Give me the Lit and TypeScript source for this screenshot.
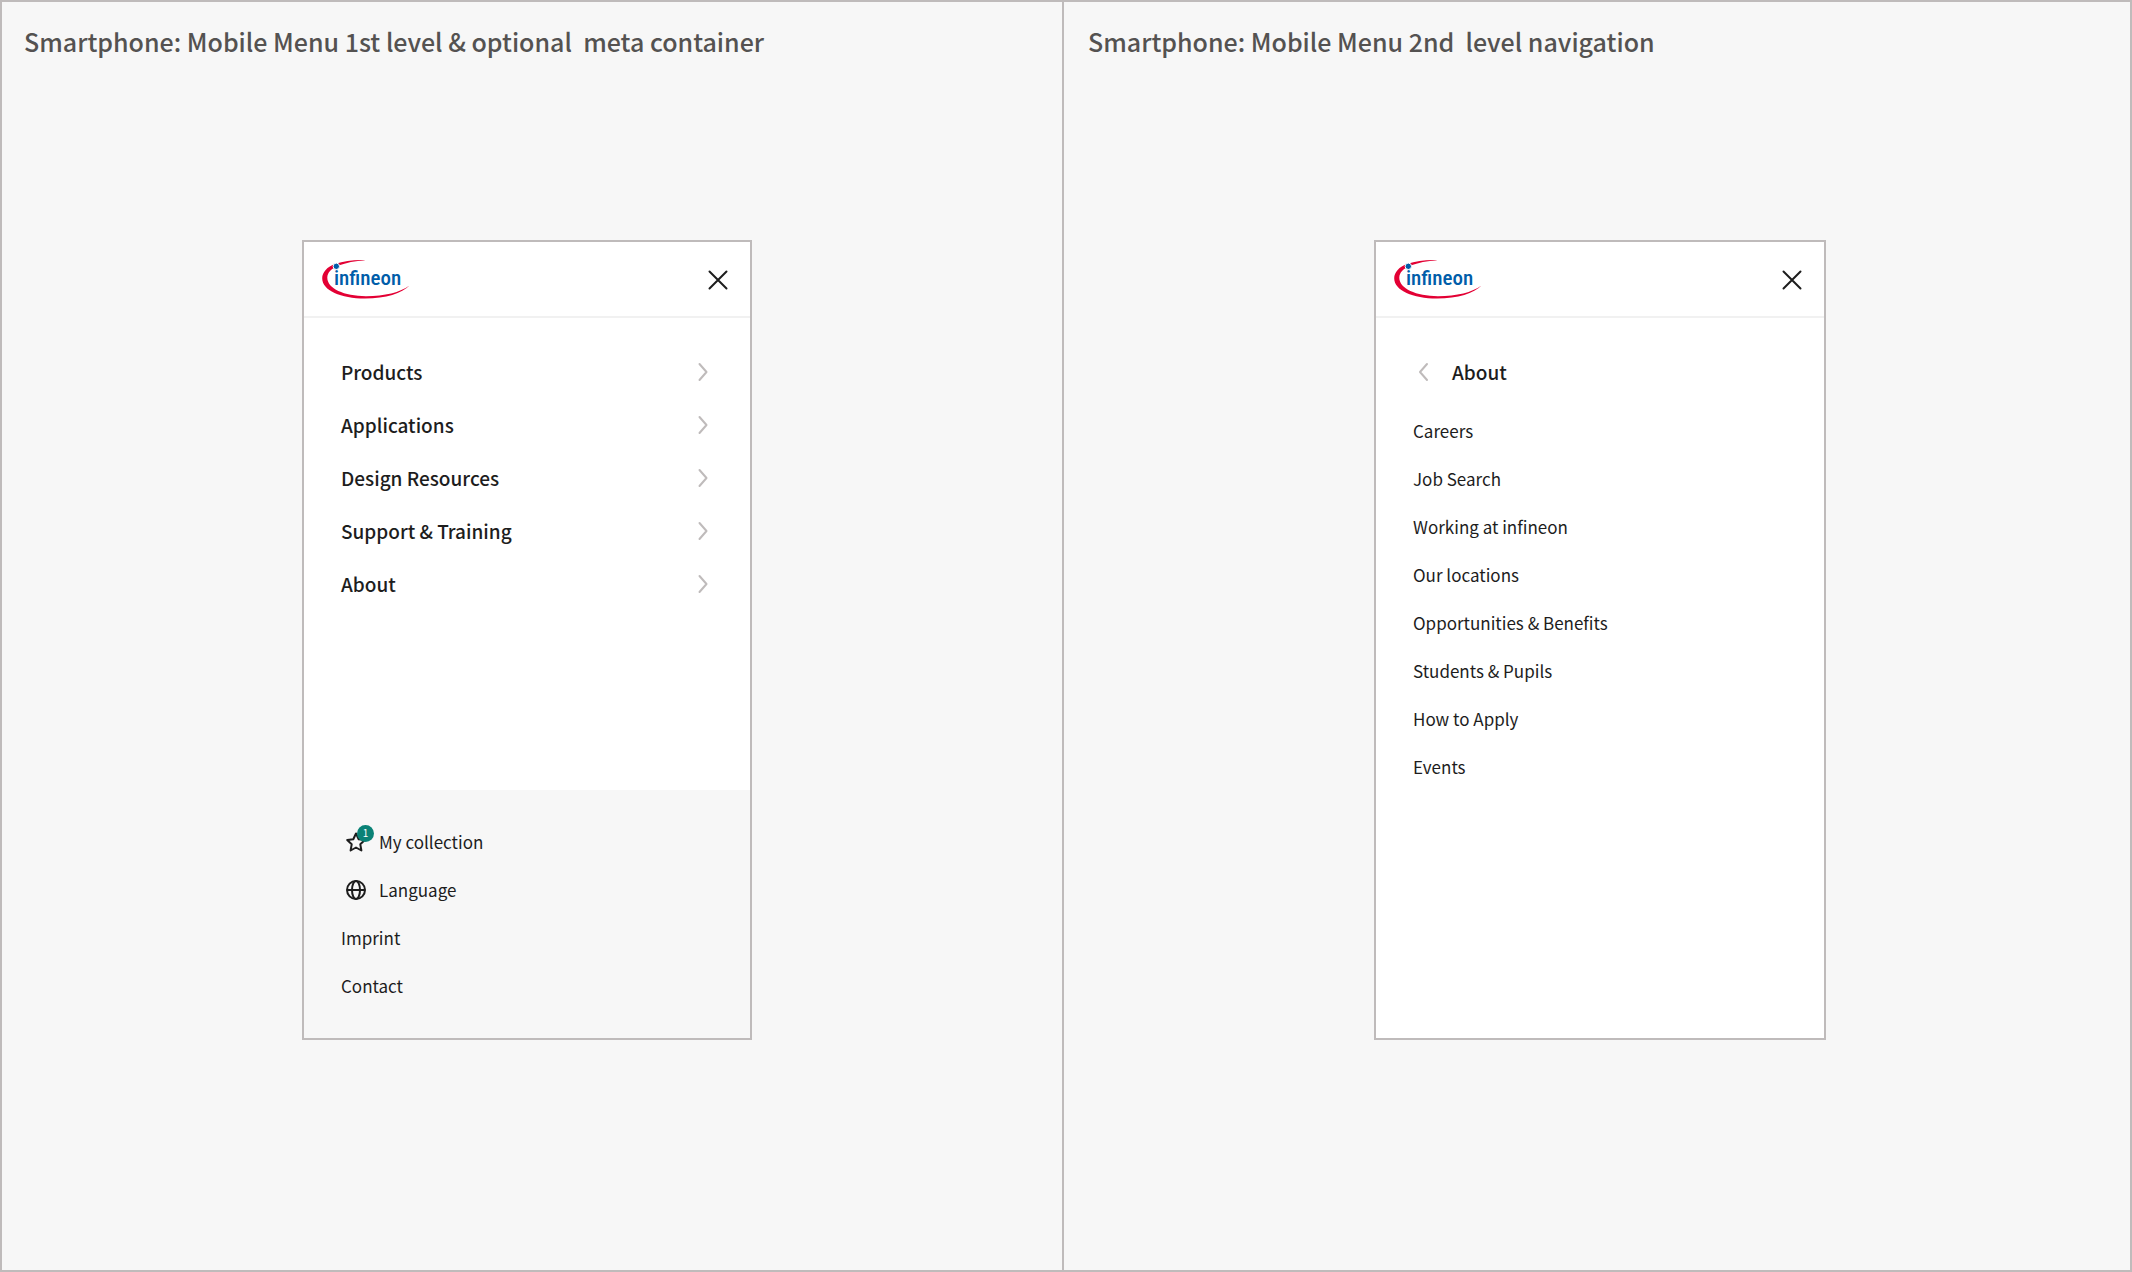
import { LitElement, html, css, svg, nothing } from "lit";
import { customElement, property } from "lit/decorators.js";

const chevronRight = html`<svg class="chevron" viewBox="0 0 24 24" aria-hidden="true">
  ${svg`<path d="M8.5 4 L15.5 12 L8.5 20" />`}
</svg>`;

const chevronLeft = html`<svg class="chevron" viewBox="0 0 24 24" aria-hidden="true">
  ${svg`<path d="M15 4 L8 12 L15 20" />`}
</svg>`;

const base = css`
  * {
    box-sizing: border-box;
  }
  button {
    font: inherit;
    color: inherit;
    background: none;
    border: 0;
    padding: 0;
    cursor: pointer;
    text-align: left;
  }
  a {
    color: inherit;
    text-decoration: none;
  }
  ul {
    list-style: none;
    margin: 0;
    padding: 0;
  }
  .chevron {
    display: block;
    width: 24px;
    height: 24px;
    fill: none;
    stroke: #bfbbbb;
    stroke-width: 2;
    stroke-linecap: round;
    stroke-linejoin: round;
  }
`;

@customElement("menu-header")
export class MenuHeader extends LitElement {
  static styles = [
    base,
    css`
      :host {
        display: block;
      }
      .bar {
        display: flex;
        align-items: center;
        justify-content: space-between;
        height: 76px;
        padding: 2px 20px 0 16px;
        border-bottom: 2px solid #f1f1f1;
      }
      .home {
        display: block;
      }
      .logo {
        display: block;
        width: 90px;
        height: 40px;
      }
      .wordmark {
        font-family: "Roboto Condensed", "Liberation Sans Narrow", "Arial Narrow", "Liberation Sans", sans-serif;
        font-size: 21px;
        font-weight: 500;
        fill: #005da9;
      }
      .swoosh {
        fill: #e30034;
      }
      .dot {
        fill: #005da9;
        stroke: #fff;
        stroke-width: 1;
      }
      .cross {
        display: block;
        width: 24px;
        height: 24px;
        fill: none;
        stroke: #1d1d1d;
        stroke-width: 2;
        stroke-linecap: round;
      }
    `,
  ];

  render() {
    return html`<header class="bar">
      <a class="home" href="#" aria-label="infineon">
        <svg class="logo" viewBox="0 1 90 40">
          <path
            class="swoosh"
            d="M45.5 1.2 C36 .6 24 1.900 15.500 4.800 C7 7.800 2.200 13.500 2.200 19.200 C2.200 31.500 21 39.500 45 39.500 C66 39.500 82 34.500 89.500 26.600 C80 33.500 65 37.200 46 37.200 C24 37.200 7.300 29.500 7.300 18.800 C7.300 13.500 11.500 9.500 18.500 6.600 C26 3.600 35 1.900 45.500 1.200 Z"
          />
          <text class="wordmark" x="14" y="26">infineon</text>
          <circle class="dot" cx="16.300" cy="7.300" r="3.200" />
        </svg>
      </a>
      <button type="button" aria-label="Close menu">
        <svg class="cross" viewBox="0 0 24 24" aria-hidden="true">
          <path d="M3.500 3.500 L20.500 20.500 M20.500 3.500 L3.500 20.500" />
        </svg>
      </button>
    </header>`;
  }
}

@customElement("menu-main")
export class MenuMain extends LitElement {
  @property({ attribute: false }) items: string[] = [];

  static styles = [
    base,
    css`
      :host {
        display: block;
        flex: 1;
      }
      .list {
        padding: 27px 35px 26px 37px;
      }
      .row {
        display: flex;
        align-items: center;
        justify-content: space-between;
        width: 100%;
        height: 53px;
        font-size: 19px;
        line-height: 28px;
        font-weight: 500;
      }
    `,
  ];

  render() {
    return html`<nav aria-label="Main">
      <ul class="list">
        ${this.items.map(
          (item) => html`<li>
            <button type="button" class="row"><span>${item}</span>${chevronRight}</button>
          </li>`
        )}
      </ul>
    </nav>`;
  }
}

@customElement("menu-meta")
export class MenuMeta extends LitElement {
  @property({ type: Number }) saved = 0;

  static styles = [
    base,
    css`
      :host {
        display: block;
        background: #f7f7f7;
      }
      .list {
        padding: 28px 37px;
      }
      .row {
        display: flex;
        align-items: center;
        gap: 10px;
        height: 48px;
        font-size: 17px;
        line-height: 24px;
      }
      .icon-box {
        position: relative;
        width: 28px;
        height: 24px;
        padding-left: 3px;
      }
      .icon {
        display: block;
        width: 24px;
        height: 24px;
        fill: none;
        stroke: #1d1d1d;
        stroke-width: 2;
        stroke-linejoin: round;
      }
      .badge {
        position: absolute;
        top: -5px;
        right: -5px;
        width: 17px;
        height: 17px;
        border-radius: 50%;
        background: #0a8276;
        color: #fff;
        font-size: 10px;
        line-height: 16px;
        text-align: center;
      }
    `,
  ];

  render() {
    return html`<nav aria-label="Meta">
      <ul class="list">
        <li>
          <a class="row" href="#collection">
            <span class="icon-box">
              <svg class="icon" viewBox="0 0 24 24" aria-hidden="true">
                <path
                  d="M12 3.500 L14.700 9.200 L20.800 10 L16.300 14.300 L17.400 20.500 L12 17.500 L6.600 20.500 L7.700 14.300 L3.200 10 L9.300 9.200 Z"
                />
              </svg>
              ${this.saved ? html`<span class="badge">${this.saved}</span>` : nothing}
            </span>
            <span>My collection</span>
          </a>
        </li>
        <li>
          <a class="row" href="#language">
            <span class="icon-box">
              <svg class="icon" viewBox="0 0 24 24" aria-hidden="true">
                <circle cx="12" cy="12" r="9" />
                <ellipse cx="12" cy="12" rx="4" ry="9" />
                <path d="M3 12 H21" />
              </svg>
            </span>
            <span>Language</span>
          </a>
        </li>
        <li><a class="row" href="#imprint">Imprint</a></li>
        <li><a class="row" href="#contact">Contact</a></li>
      </ul>
    </nav>`;
  }
}

@customElement("menu-sub")
export class MenuSub extends LitElement {
  @property() heading = "";
  @property({ attribute: false }) items: string[] = [];

  static styles = [
    base,
    css`
      :host {
        display: block;
        flex: 1;
      }
      .body {
        padding: 27px 36px;
      }
      .back {
        display: flex;
        align-items: center;
        gap: 16px;
        width: 100%;
        height: 53px;
        margin-bottom: 9px;
        font-size: 19px;
        line-height: 28px;
        font-weight: 500;
      }
      .list {
        padding-left: 1px;
      }
      .row {
        display: flex;
        align-items: center;
        height: 48px;
        font-size: 17px;
        line-height: 24px;
      }
    `,
  ];

  render() {
    return html`<nav class="body" aria-label=${this.heading}>
      <button type="button" class="back">${chevronLeft}<span>${this.heading}</span></button>
      <ul class="list">
        ${this.items.map((item) => html`<li><a class="row" href="#">${item}</a></li>`)}
      </ul>
    </nav>`;
  }
}

@customElement("app-root")
export class AppRoot extends LitElement {
  private mainItems = ["Products", "Applications", "Design Resources", "Support & Training", "About"];
  private aboutItems = [
    "Careers",
    "Job Search",
    "Working at infineon",
    "Our locations",
    "Opportunities & Benefits",
    "Students & Pupils",
    "How to Apply",
    "Events",
  ];

  static styles = [
    base,
    css`
      :host {
        display: block;
        font-family: "Noto Sans CJK SC", "Noto Sans", sans-serif;
        color: #1d1d1d;
      }
      .board {
        display: grid;
        grid-template-columns: 1060fr 1066fr;
        gap: 2px;
        min-height: 100vh;
        padding: 2px;
        background: #bfbbbb;
      }
      .panel {
        display: flex;
        flex-direction: column;
        padding: 19px 24px;
        background: #f7f7f7;
      }
      .first {
        padding-left: 22px;
      }
      .title {
        margin: 0 0 179px;
        font-size: 25px;
        line-height: 40px;
        font-weight: 500;
        color: #545251;
        white-space: pre-wrap;
      }
      .stage {
        display: flex;
        justify-content: center;
      }
      .first .stage {
        padding-right: 8px;
      }
      .second .stage {
        padding-left: 6px;
      }
      .phone {
        display: flex;
        flex-direction: column;
        width: 100%;
        max-width: 450px;
        min-height: 800px;
        border: 2px solid #bfbbbb;
        background: #fff;
      }
      .second .phone {
        max-width: 452px;
      }
    `,
  ];

  render() {
    return html`<main class="board">
      <section class="panel first">
        <h2 class="title">${"Smartphone: Mobile Menu 1st level & optional  meta container"}</h2>
        <div class="stage">
          <div class="phone">
            <menu-header></menu-header>
            <menu-main .items=${this.mainItems}></menu-main>
            <menu-meta saved="1"></menu-meta>
          </div>
        </div>
      </section>
      <section class="panel second">
        <h2 class="title">${"Smartphone: Mobile Menu 2nd  level navigation"}</h2>
        <div class="stage">
          <div class="phone">
            <menu-header></menu-header>
            <menu-sub heading="About" .items=${this.aboutItems}></menu-sub>
          </div>
        </div>
      </section>
    </main>`;
  }
}
